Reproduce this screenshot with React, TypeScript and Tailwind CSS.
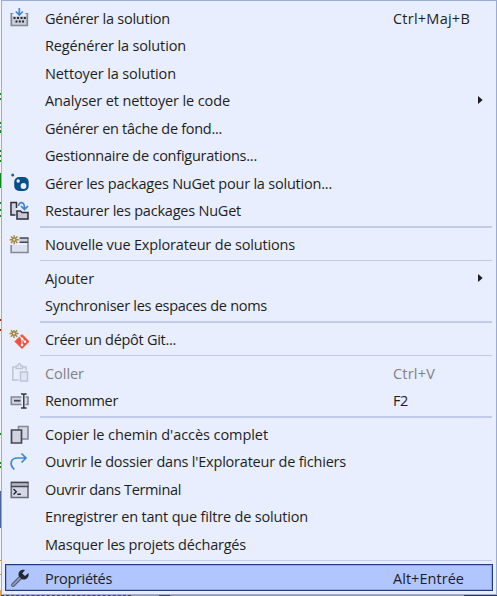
import { ReactNode, useLayoutEffect, useRef } from "react";

type Item = {
  label: string;
  width: number;
  icon?: ReactNode;
  keys?: string;
  keysWidth?: number;
  submenu?: boolean;
  disabled?: boolean;
  selected?: boolean;
};

/** Single-line label whose tracking is adjusted so that it fills `width` pixels. */
function FitText({ text, width }: { text: string; width: number }) {
  const ref = useRef<HTMLSpanElement>(null);
  useLayoutEffect(() => {
    const fit = () => {
      const el = ref.current;
      if (!el) return;
      el.style.letterSpacing = "0px";
      const natural = el.getBoundingClientRect().width;
      el.style.letterSpacing = `${(width - natural) / text.length}px`;
    };
    fit();
    const frame = requestAnimationFrame(fit);
    const timer = setTimeout(fit, 60);
    return () => {
      cancelAnimationFrame(frame);
      clearTimeout(timer);
    };
  }, [text, width]);
  return (
    <span ref={ref} className="inline-block whitespace-pre">
      {text}
    </span>
  );
}

const Svg = ({ children }: { children: ReactNode }) => (
  <svg width="20" height="20" viewBox="0 0 20 20" fill="none">{children}</svg>
);

const Spark = ({ x, y }: { x: number; y: number }) => (
  <g transform={`translate(${x} ${y})`} stroke="#a08238" strokeWidth="1.4">
    <path d="M0-4.500V-2M0 2V4.500M-4.500 0H-2M2 0H4.500M-3.200-3.200L-1.500-1.500M1.500 1.500L3.200 3.200M-3.200 3.200L-1.500 1.500M1.500-1.500L3.200-3.200" />
    <circle r="1.700" fill="#e8eefe" />
  </g>
);

const BuildIcon = (
  <Svg>
    <path d="M2.300 5.500v12h16v-12" fill="#c9cddb" stroke="#858995" strokeWidth="1.700" />
    <path d="M3.300 4.500h14v3.500h-14z" fill="#e8eefe" />
    <path d="M1.500 5.500h3M16.300 5.500h3" stroke="#858995" />
    <path d="M4.500 9h2v2h-2zM8 9h2v2H8zM11.500 9h2v2h-2zM14.800 9h2v2h-2zM6.500 12.500h2v2h-2zM9.800 12.500h2v2h-2zM13 12.500h2v2h-2z" fill="#27282d" />
    <path d="M10.300 0v7M6.800 3.500l3.500 3.500 3.500-3.500" stroke="#3f86d0" strokeWidth="1.700" />
  </Svg>
);
const NugetIcon = (
  <Svg>
    <circle cx="3.700" cy="2" r="1.500" fill="#1e5f93" />
    <rect x="5.200" y="4" width="14.500" height="14" rx="5" fill="#075087" />
    <circle cx="9.200" cy="8" r="1.700" fill="#e8eefe" />
    <circle cx="14.500" cy="13" r="2.900" fill="#e8eefe" />
  </Svg>
);
const RestoreIcon = (
  <Svg>
    <path d="M6.500 14h-4.500V1.500h5.500V7" fill="#d0d4e2" stroke="#2d2e34" strokeWidth="1.500" />
    <path d="M8 10h3.500l1.500 1.500h6V18H8z" fill="#c6cad9" stroke="#2d2e34" strokeWidth="1.500" />
    <path d="M9.500 5c.500-5 6-4.500 6 2M12 5l3.500 3.500L19 5" stroke="#3f86d0" strokeWidth="1.700" />
  </Svg>
);
const NewViewIcon = (
  <Svg>
    <path d="M3 10h15v7.500H3z" fill="#dce1f1" />
    <path d="M10.500 3h8.500v4h-8.500z" fill="#c8ccd9" />
    <path d="M19 3v14.500H2.200V10" stroke="#858995" strokeWidth="1.600" />
    <path d="M10.500 3h9M10.500 7.300h8.500" stroke="#45464d" strokeWidth="1.400" />
    <Spark x={5.200} y={4.700} />
  </Svg>
);
const GitIcon = (
  <Svg>
    <path d="M13 4.500l7 7-7 7-7-7z" fill="#f0503b" stroke="#f0503b" strokeLinejoin="round" />
    <path d="M10.300 6l2.700 2.700v6.500M13 8.700l3 3" stroke="#f6d5d8" strokeWidth="1.200" />
    <circle cx="13" cy="8.800" r="1.300" fill="#fff" />
    <circle cx="13" cy="15" r="1.300" fill="#fff" />
    <circle cx="16" cy="11.700" r="1.300" fill="#fff" />
    <Spark x={5} y={3.500} />
  </Svg>
);
const PasteIcon = (
  <Svg>
    <path d="M9.500 17H3.800V4H6.500M13.500 4h3.500v3.500" stroke="#c0c4d1" strokeWidth="1.500" />
    <path d="M7 5.500V3h1.700c0-3 3-3 3 0h1.800v2.500z" stroke="#c0c4d1" strokeWidth="1.300" />
    <path d="M11.500 9h7v9h-7z" fill="#e0e5f5" stroke="#c0c4d1" strokeWidth="1.500" />
  </Svg>
);
const RenameIcon = (
  <Svg>
    <path d="M12.500 6H2.300v7.500h10.200M16.500 6H19v7.500h-2.500" fill="#d0d4e2" stroke="#858995" strokeWidth="1.600" />
    <path d="M5 9.700h6.500" stroke="#45464d" strokeWidth="1.800" />
    <path d="M12 3h2l.800.800.8-.800h2M14.800 3.500v13M12 17h2l.8-.800.800.800h2" stroke="#36373d" strokeWidth="1.500" />
  </Svg>
);
const CopyIcon = (
  <Svg>
    <path d="M9.500 1.500H19V14H9.500z" fill="#d4d8e6" stroke="#858995" strokeWidth="1.600" />
    <path d="M2.500 5h10v13h-10z" fill="#d0d4e2" stroke="#45464d" strokeWidth="1.700" />
  </Svg>
);
const ShareIcon = (
  <Svg>
    <path d="M5.300 17.500C0 12.500 1.500 6 8.500 6h8.500M12.500 1.500L17 6l-4.500 4.500" stroke="#3f86d0" strokeWidth="1.700" />
  </Svg>
);
const TerminalIcon = (
  <Svg>
    <path d="M2.300 2.500H19v15H2.300z" fill="#d4d8e6" stroke="#686b75" strokeWidth="1.600" />
    <path d="M3 3h15.500v3H3z" fill="#b8bcc9" />
    <path d="M2 2.500h17.500M2 6.500h17.500" stroke="#45464d" strokeWidth="1.300" />
    <path d="M4.500 9l2.800 2.700-2.800 2.800M8.300 14.300h3.500" stroke="#27282d" strokeWidth="1.400" />
  </Svg>
);
const WrenchIcon = (
  <Svg>
    <path d="M4 16L12 8" stroke="#5d657e" strokeWidth="4" strokeLinecap="round" />
    <path d="M4 16l7-7" stroke="#929cbd" strokeWidth="1.700" strokeLinecap="round" />
    <path d="M16 1C12.500-.200 8.500 2.500 9.700 7l3.200 3.300c4.500 1.200 7.500-2.500 6.600-6.200l-3.500 3-2.800-2.600z" fill="#242834" />
  </Svg>
);

const groups: Item[][] = [
  [
    { label: "Générer la solution", width: 125, icon: BuildIcon, keys: "Ctrl+Maj+B", keysWidth: 77 },
    { label: "Regénérer la solution", width: 141 },
    { label: "Nettoyer la solution", width: 131 },
    { label: "Analyser et nettoyer le code", width: 185, submenu: true },
    { label: "Générer en tâche de fond...", width: 177 },
    { label: "Gestionnaire de configurations...", width: 212 },
    { label: "Gérer les packages NuGet pour la solution...", width: 287, icon: NugetIcon },
    { label: "Restaurer les packages NuGet", width: 196, icon: RestoreIcon },
  ],
  [{ label: "Nouvelle vue Explorateur de solutions", width: 250, icon: NewViewIcon }],
  [
    { label: "Ajouter", width: 49, submenu: true },
    { label: "Synchroniser les espaces de noms", width: 222 },
  ],
  [{ label: "Créer un dépôt Git...", width: 131, icon: GitIcon }],
  [
    { label: "Coller", width: 39, icon: PasteIcon, keys: "Ctrl+V", keysWidth: 42, disabled: true },
    { label: "Renommer", width: 73, icon: RenameIcon, keys: "F2", keysWidth: 15 },
  ],
  [
    { label: "Copier le chemin d'accès complet", width: 223, icon: CopyIcon },
    { label: "Ouvrir le dossier dans l'Explorateur de fichiers", width: 301, icon: ShareIcon },
    { label: "Ouvrir dans Terminal", width: 136, icon: TerminalIcon },
    { label: "Enregistrer en tant que filtre de solution", width: 263 },
    { label: "Masquer les projets déchargés", width: 201 },
  ],
  [{ label: "Propriétés", width: 67, icon: WrenchIcon, keys: "Alt+Entrée", keysWidth: 71, selected: true }],
];

// Slivers of the editor that stay visible along the left side of the menu: [top, height, colour].
const editorMarks: [number, number, string][] = [
  [93, 2, "#108a18"], [98, 2, "#108a18"], [122, 2, "#108a18"], [126, 2, "#58a5a0"], [130, 3, "#108a18"],
  [150, 2, "#108a18"], [155, 2, "#108a18"], [160, 2, "#108a18"], [173, 15, "#108a18"], [202, 2, "#108a18"],
  [209, 2, "#108a18"], [215, 2, "#108a18"], [319, 2, "#a31515"], [329, 2, "#a31515"], [433, 2, "#108a18"],
  [462, 2, "#108a18"], [466, 2, "#108a18"], [491, 37, "#4a61a2"], [560, 1, "#d88a38"], [574, 1, "#d88a38"],
  [590, 6, "#e0a04c"],
];

function Row({ item }: { item: Item }) {
  return (
    <div
      className={`flex items-center ${item.disabled ? "text-[#808187]" : "text-[#1e1e1e]"} ${
        item.selected
          ? "h-[27px] bg-[#b1c5ff] pt-px shadow-[inset_0_0_0_1px_#203c7c,inset_0_0_0_2px_#91a7e5]"
          : "h-[27.5px]"
      }`}
    >
      <div className="ml-[4px] w-[36px] shrink-0 pt-px">{item.icon}</div>
      <div className="w-[348px] shrink-0 pt-[1.8px]"><FitText text={item.label} width={item.width} /></div>
      <div className="w-[84px] shrink-0 pt-[1.8px]">
        {item.keys && <FitText text={item.keys} width={item.keysWidth ?? 0} />}
      </div>
      {item.submenu && (
        <svg width="7" height="10" viewBox="0 0 7 10"><path d="M1 1l4.700 4L1 9z" fill="#1e1e1e" /></svg>
      )}
    </div>
  );
}

export default function App() {
  return (
    <div className="flex h-[596px] w-[497px] overflow-hidden bg-[#f3f4f7] font-['Open_Sans','Noto_Sans',sans-serif] text-[14.5px] leading-[20px]">
      <svg className="shrink-0" width="1" height="596">
        {editorMarks.map(([y, h, fill]) => <rect key={y} y={y} width="1" height={h} fill={fill} />)}
      </svg>
      <div className="flex w-[496px] shrink-0 flex-col">
        <div className="h-[595px] shrink-0 border border-[#9aabd5] bg-[#e8eefe] pl-[3px] pr-[3px] pt-[3px]">
          {groups.map((group, i) => (
            <div key={i}>
              {i > 0 && (
                <div className={`h-[6.25px] ${i === 6 ? "pt-[2.4px]" : "pt-[2px]"}`}>
                  <div className={`ml-[35px] mr-px ${i % 2 === 1 && i < 6 ? "h-[2px]" : "h-px"} bg-[#c0caea]`} />
                </div>
              )}
              {group.map((item) => <Row key={item.label} item={item} />)}
            </div>
          ))}
        </div>
        <div className="flex h-px shrink-0 bg-[#9299a9]">
          <div className="h-px w-[130px] border-t border-dashed border-[#4a4650]" />
          <div className="ml-[28px] h-px w-[11px] bg-[#354768]" />
          <div className="ml-auto h-px w-[33px] bg-[#26385f]" />
        </div>
      </div>
    </div>
  );
}
